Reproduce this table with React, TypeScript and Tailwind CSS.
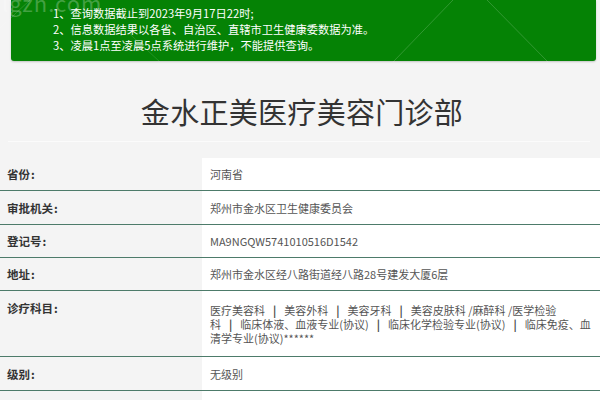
import React from "react";

const Sep = () => (
  <span className="inline-block mx-[8px] font-bold text-[#444] leading-[12px] align-baseline">|</span>
);

const rows: { label: string; value: React.ReactNode; h: string; tall?: boolean }[] = [
  { label: "省份", value: "河南省", h: "h-[33px]" },
  { label: "审批机关", value: "郑州市金水区卫生健康委员会", h: "h-[34px]" },
  { label: "登记号", value: "MA9NGQW5741010516D1542", h: "h-[33px]" },
  { label: "地址", value: "郑州市金水区经八路街道经八路28号建发大厦6层", h: "h-[33px]" },
  {
    label: "诊疗科目",
    value: (
      <>
        <div>
          医疗美容科
          <Sep />
          美容外科
          <Sep />
          美容牙科
          <Sep />
          美容皮肤科 /麻醉科 /医学检验
        </div>
        <div>
          科<Sep />
          临床体液、血液专业(协议)
          <Sep />
          临床化学检验专业(协议)
          <Sep />
          临床免疫、血
        </div>
        <div>清学专业(协议)******</div>
      </>
    ),
    h: "h-[66px]",
    tall: true,
  },
  { label: "级别", value: "无级别", h: "h-[34px]" },
  { label: "", value: "", h: "h-[34px]" },
];

export default function App() {
  return (
    <div
      className="relative w-[600px] h-[400px] overflow-hidden bg-[#f4f4f4] text-[#333]"
      style={{ fontFamily: '"Noto Sans CJK SC", "Noto Sans", sans-serif' }}
    >
      <div className="mx-[11px] w-[585px] bg-[#058205] rounded-b-[3px] shadow-[0_1px_2px_rgba(0,0,0,0.2)] pl-[42px] pt-[5px] pb-[8px] text-white text-[11.25px] leading-[16px]">
        <div>1、查询数据截止到2023年9月17日22时;</div>
        <div>2、信息数据结果以各省、自治区、直辖市卫生健康委数据为准。</div>
        <div>3、凌晨1点至凌晨5点系统进行维护，不能提供查询。</div>
      </div>

      <div className="mx-[8px] w-[582px] h-[81px] pt-[36px] text-center border-b border-[#fbfbfb]">
        <h1 className="text-[29px] leading-none text-[#333] tracking-[0.3px] pl-[6px]">
          金水正美医疗美容门诊部
        </h1>
      </div>

      <div className="mt-[16px] flex flex-col">
        {rows.map((r, i) => (
          <div
            key={i}
            className={`flex border-b border-[#4d7b6a] shadow-[0_1px_0_#d6e9e1] ${r.h}`}
          >
            <div
              className={`w-[202px] shrink-0 bg-[#f4f4f4] pl-[7px] text-[11.5px] font-semibold text-[#333] leading-[16px] ${r.tall ? "pt-[9px]" : "flex items-center"}`}
            >
              {r.label && (
                <span>
                  {r.label}
                  <span className="ml-[1px]">:</span>
                </span>
              )}
            </div>
            <div
              className={`flex-1 bg-white pl-[8px] pr-[3px] text-[11px] text-[#555] leading-[14px] ${r.tall ? "pt-[12px]" : "flex items-center"}`}
            >
              {r.tall ? r.value : <span>{r.value}</span>}
            </div>
          </div>
        ))}
      </div>

      <div className="pointer-events-none absolute left-[2px] top-[-14px] text-[22px] text-white/25 tracking-[1px]">
        lgzh.com
      </div>
      <svg className="pointer-events-none absolute left-0 top-0" width="600" height="400">
        <line x1="453" y1="0" x2="393" y2="62" stroke="rgba(255,255,255,0.18)" strokeWidth="1" />
        <line x1="487" y1="0" x2="548" y2="62" stroke="rgba(255,255,255,0.18)" strokeWidth="1" />
        <line x1="0" y1="28" x2="30" y2="0" stroke="rgba(255,255,255,0.15)" strokeWidth="1" />
        <line x1="120" y1="25" x2="160" y2="62" stroke="rgba(255,255,255,0.12)" strokeWidth="1" />
      </svg>
    </div>
  );
}
